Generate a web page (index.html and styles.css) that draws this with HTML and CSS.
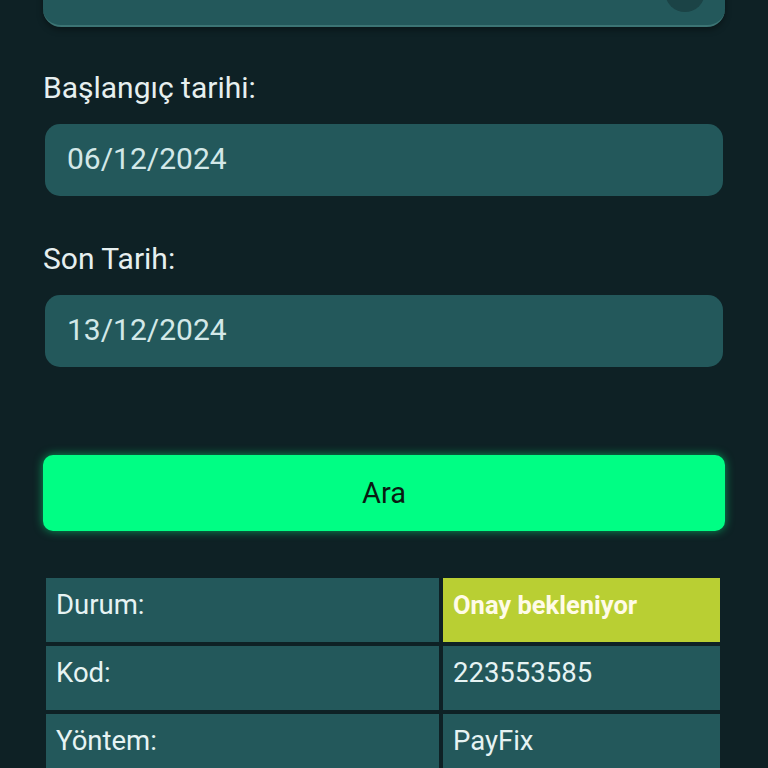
FILE: index.html
```html
<!DOCTYPE html>
<html lang="tr">
<head>
    <meta charset="UTF-8">
    <meta name="viewport" content="width=device-width, initial-scale=1.0">
    <title>Ödeme Sorgula</title>
    <link rel="stylesheet" href="styles.css">
</head>
<body>

    <div class="page">
        <div class="search-box">
            <span class="search-btn"><span class="dot"></span></span>
        </div>

        <label class="field-label">Başlangıç tarihi:</label>
        <div class="date-input">06/12/2024</div>

        <label class="field-label">Son Tarih:</label>
        <div class="date-input">13/12/2024</div>

        <button class="search-submit">Ara</button>

        <table class="result">
            <tr>
                <td class="key">Durum:</td>
                <td class="value pending">Onay bekleniyor</td>
            </tr>
            <tr>
                <td class="key">Kod:</td>
                <td class="value">223553585</td>
            </tr>
            <tr>
                <td class="key">Yöntem:</td>
                <td class="value">PayFix</td>
            </tr>
        </table>
    </div>

</body>
</html>
```

FILE: styles.css
```css
body {
    margin: 0;
    background: #0e2125;
    font-family: Roboto, "Noto Sans", sans-serif;
    color: #e6efef;
    overflow: hidden;
}
.page {
    width: 682px;
    margin: 0 auto 0 43px;
}
.search-box {
    height: 70px;
    margin-top: -43px;
    background: #23585b;
    border-radius: 18px;
    border-bottom: 2px solid #3c7474;
    box-shadow: 0 3px 6px rgba(0, 0, 0, 0.35);
    display: flex;
    justify-content: flex-end;
    align-items: flex-start;
    padding: 15px 20px 0 0;
    box-sizing: border-box;
}
.search-btn {
    width: 40px;
    height: 40px;
    border-radius: 50%;
    background: #1b4346;
    display: flex;
    justify-content: center;
    align-items: flex-end;
    padding-bottom: 18px;
    box-sizing: border-box;
}
.dot {
    width: 3px;
    height: 3px;
    background: #cfe;
    border-radius: 50%;
}
.field-label {
    display: block;
    font-size: 30px;
    line-height: 32px;
    margin: 45px 0 20px;
}
.date-input {
    margin: 0 2px;
    height: 72px;
    background: #23585b;
    border-radius: 15px;
    padding: 0 0 3px 22px;
    box-sizing: border-box;
    display: flex;
    align-items: center;
    font-size: 30px;
    color: #d3e8e8;
}
.date-input + .field-label {
    margin-top: 47px;
}
.search-submit {
    display: block;
    width: 100%;
    height: 76px;
    margin-top: 88px;
    border: none;
    border-radius: 10px;
    background: #00fe84;
    box-shadow: 0 0 10px rgba(0, 254, 132, 0.55);
    font-family: Roboto, sans-serif;
    font-size: 29px;
    color: #0a1a12;
    cursor: pointer;
}
.result {
    margin-top: 43px;
    border-spacing: 4px;
    margin-left: -1px;
}
.result td {
    background: #23585b;
    height: 64px;
    padding: 10px 10px 0;
    box-sizing: border-box;
    vertical-align: top;
    font-size: 27.5px;
    line-height: 34px;
    color: #e6f3f3;
}
.result .key {
    width: 393px;
}
.result .value {
    width: 277px;
}
.result .pending {
    background: #b9cf33;
    color: #fffbe8;
    font-weight: bold;
    font-size: 25.5px;
}
```
